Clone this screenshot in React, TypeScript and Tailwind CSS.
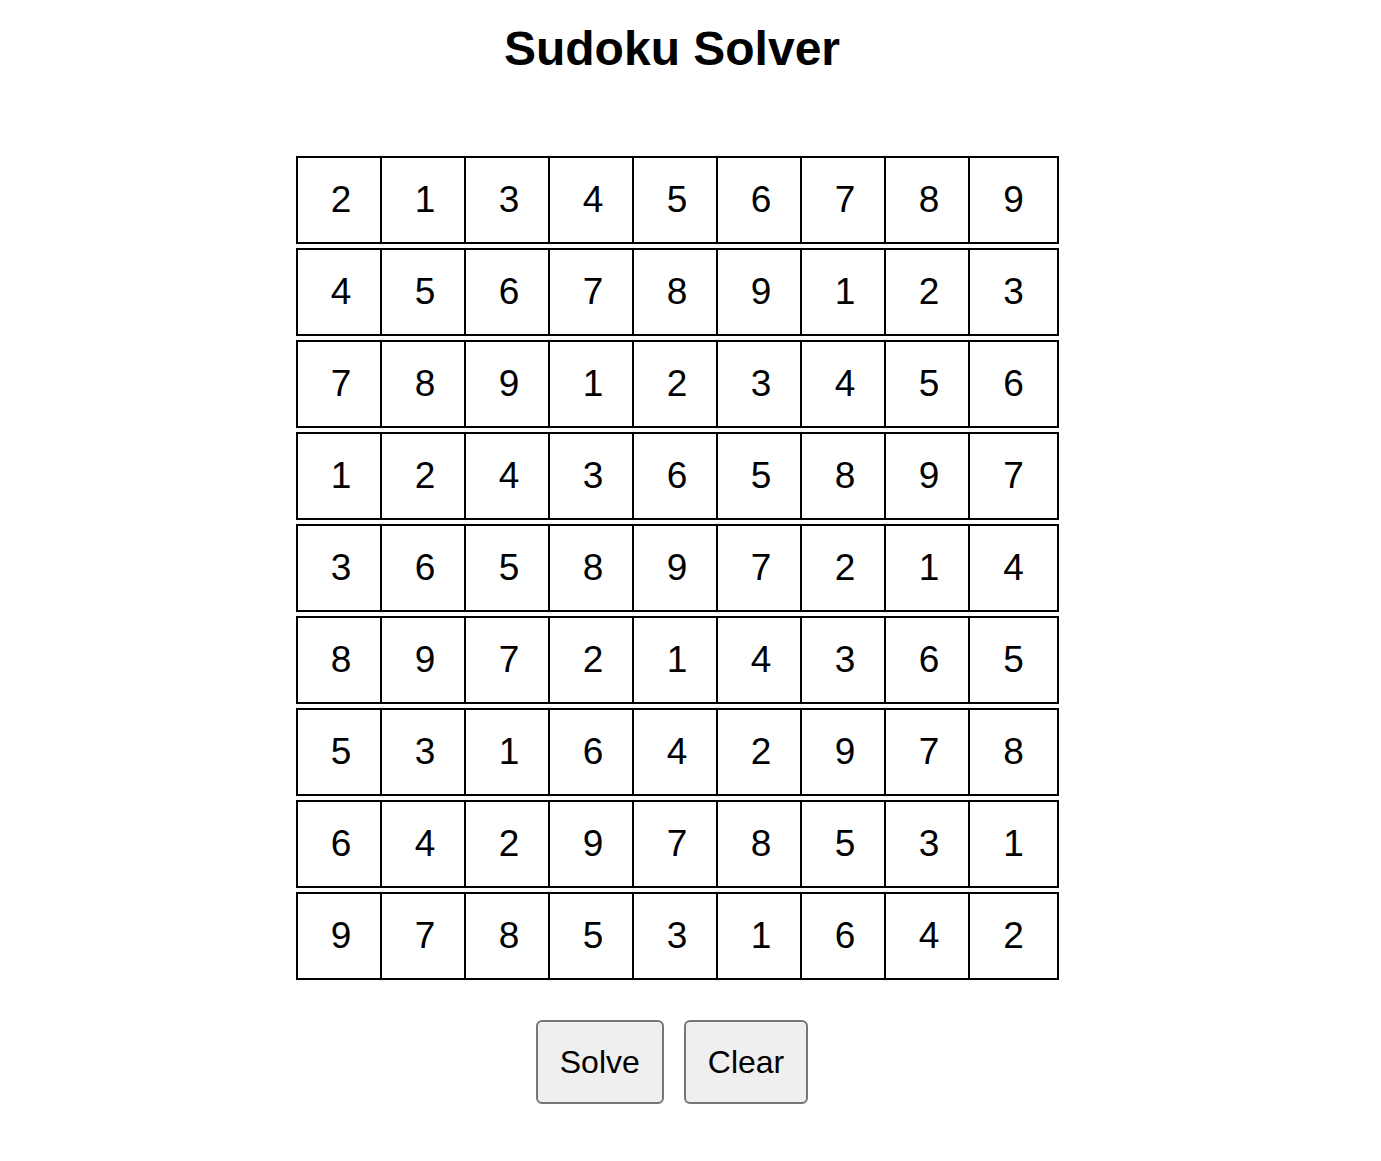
import React, { useState } from 'react'

const initialBoard: number[][] = [
    [2, 1, 3, 4, 5, 6, 7, 8, 9],
    [4, 5, 6, 7, 8, 9, 1, 2, 3],
    [7, 8, 9, 1, 2, 3, 4, 5, 6],
    [1, 2, 4, 3, 6, 5, 8, 9, 7],
    [3, 6, 5, 8, 9, 7, 2, 1, 4],
    [8, 9, 7, 2, 1, 4, 3, 6, 5],
    [5, 3, 1, 6, 4, 2, 9, 7, 8],
    [6, 4, 2, 9, 7, 8, 5, 3, 1],
    [9, 7, 8, 5, 3, 1, 6, 4, 2],
]

const App: React.FC = () => {
    const [board, setBoard] = useState<(number | '')[][]>(initialBoard)

    const clearBoard = () => setBoard(board.map((row) => row.map(() => '')))

    return (
        <div className="w-[1344px] min-h-[1161px] bg-white flex flex-col items-center font-['Liberation_Sans',Arial,sans-serif] text-black">
            <h1 className="mt-[21px] text-[48px] leading-[55px] font-bold">Sudoku Solver</h1>

            <div className="self-start ml-[296px] mt-[80px] flex flex-col gap-[4px]">
                {board.map((row, r) => (
                    <div key={r} className="flex">
                        {row.map((value, c) => (
                            <div
                                key={c}
                                className={
                                    c === 8
                                        ? 'w-[91px] h-[88px] border-2 border-black flex items-center justify-center text-[37px]'
                                        : 'w-[84px] h-[88px] pl-[4px] border-y-2 border-l-2 border-black flex items-center justify-center text-[37px]'
                                }
                            >
                                {value}
                            </div>
                        ))}
                    </div>
                ))}
            </div>

            <div className="mt-[40px] flex gap-[20px]">
                <button className="h-[84px] px-[22px] border-2 border-[#767676] rounded-[6px] bg-[#efefef] text-[32px]">
                    Solve
                </button>
                <button onClick={clearBoard} className="h-[84px] px-[22px] border-2 border-[#767676] rounded-[6px] bg-[#efefef] text-[32px]">
                    Clear
                </button>
            </div>
        </div>
    )
}

export default App
